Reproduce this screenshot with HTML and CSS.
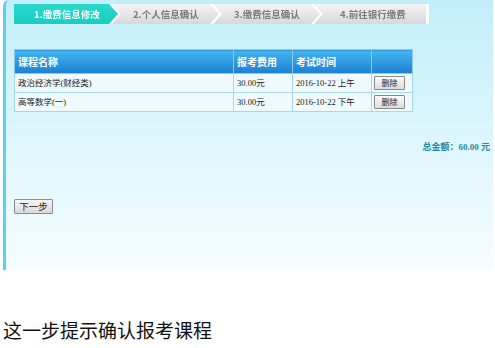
FILE: index.html
```html
<!DOCTYPE html>
<html lang="zh-CN">

<head>
    <meta charset="UTF-8">
    <meta name="viewport" content="width=device-width, initial-scale=1.0">
    <title>报考缴费</title>
    <link rel="stylesheet" href="styles.css">
</head>

<body>

    <div class="panel">
        <!-- 步骤条 -->
        <ol class="steps">
            <li class="step s1 active"><span>1.缴费信息修改</span></li>
            <li class="step s2"><span>2.个人信息确认</span></li>
            <li class="step s3"><span>3.缴费信息确认</span></li>
            <li class="step s4 last"><span>4.前往银行缴费</span></li>
        </ol>

        <table class="courses">
            <colgroup>
                <col class="c-name">
                <col class="c-fee">
                <col class="c-time">
                <col class="c-op">
            </colgroup>
            <tr>
                <th>课程名称</th>
                <th>报考费用</th>
                <th>考试时间</th>
                <th></th>
            </tr>
            <tr>
                <td>政治经济学(财经类)</td>
                <td>30.00元</td>
                <td>2016-10-22 上午</td>
                <td><button class="del">删除</button></td>
            </tr>
            <tr>
                <td>高等数学(一)</td>
                <td>30.00元</td>
                <td>2016-10-22 下午</td>
                <td><button class="del">删除</button></td>
            </tr>
        </table>

        <p class="total">总金额：60.00 元</p>

        <button class="next">下一步</button>
    </div>

    <p class="note">这一步提示确认报考课程</p>

</body>

</html>
```

FILE: styles.css
```css
body {
    margin: 0;
    font-family: "Liberation Serif", "Noto Sans CJK SC", serif;
    background: #fff;
}

.panel {
    margin-left: 3px;
    width: 490px;
    height: 270px;
    box-sizing: border-box;
    border-left: 3px solid #5cd2ea;
    border-top-left-radius: 6px;
    background: linear-gradient(#c2eef9, #f6fdff);
    padding: 4px 0 0 8px;
}

/* 步骤条 */
.steps {
    display: flex;
    list-style: none;
    margin: 0;
    padding: 0;
    height: 20px;
}

.step {
    position: relative;
    height: 20px;
    margin-left: -6px;
    filter: drop-shadow(3px 0 0 #fff);
}

.step span {
    display: block;
    height: 20px;
    width: 107px;
    box-sizing: border-box;
    padding-left: 21px;
    line-height: 20px;
    font-size: 9.5px;
    font-weight: bold;
    font-family: "Noto Sans CJK SC", sans-serif;
    color: #7a7a7a;
    background: linear-gradient(#f4f4f4, #d8d8d8);
    clip-path: polygon(0 0, 98px 0, 107px 50%, 98px 100%, 0 100%, 9px 50%);
}

.s1 { z-index: 4; margin-left: 0; }
.s2 { z-index: 3; }
.s3 { z-index: 2; }
.s4 { z-index: 1; }

.step.active span {
    width: 104px;
    padding-left: 20px;
    color: #fff;
    background: linear-gradient(#2ad8cd, #18cdc2);
    clip-path: polygon(0 0, 95px 0, 104px 50%, 95px 100%, 0 100%);
}

.step.last span {
    width: 112px;
    padding-left: 26px;
    clip-path: polygon(0 0, 100% 0, 100% 100%, 0 100%, 9px 50%);
}

/* 课程表格 */
.courses {
    margin-top: 25px;
    width: 398px;
    table-layout: fixed;
    border-collapse: collapse;
}

.c-name { width: 219px; }
.c-fee { width: 59px; }
.c-time { width: 79px; }
.c-op { width: 41px; }

.courses th {
    height: 23px;
    padding: 0 3px;
    text-align: left;
    font-size: 10px;
    font-weight: bold;
    font-family: "Noto Sans CJK SC", sans-serif;
    color: #fff;
    background: linear-gradient(#45b6f0, #1a7fd2);
    border: 1px solid #8dcbee;
}

.courses td {
    height: 18px;
    padding: 0 3px;
    line-height: 16px;
    white-space: nowrap;
    font-size: 8.5px;
    color: #222;
    background: #eefafd;
    border: 1px solid #a6d7ee;
}

.del {
    display: block;
    width: 31px;
    height: 14px;
    padding: 0;
    margin-left: -1px;
    font-size: 8px;
    line-height: 12px;
    font-family: "Noto Sans CJK SC", sans-serif;
    color: #222;
    background: linear-gradient(#fbfbfb, #dcdcdc);
    border: 1px solid #8a8a8a;
    border-radius: 1px;
}

.total {
    margin: 28px 0 0;
    padding-right: 3px;
    line-height: 14px;
    text-align: right;
    font-size: 9px;
    font-weight: bold;
    color: #2c8a9b;
}

.next {
    display: block;
    margin-top: 45px;
    width: 39px;
    height: 15px;
    padding: 0;
    font-size: 9.5px;
    line-height: 13px;
    font-family: "Noto Sans CJK SC", sans-serif;
    color: #222;
    background: linear-gradient(#f6f6f6, #d9d9d9);
    border: 1px solid #8d8d8d;
    border-radius: 1px;
}

.note {
    margin: 48px 0 0 3px;
    font-size: 19px;
    line-height: 24px;
    color: #111;
    font-family: "Noto Sans CJK SC", serif;
}
```
